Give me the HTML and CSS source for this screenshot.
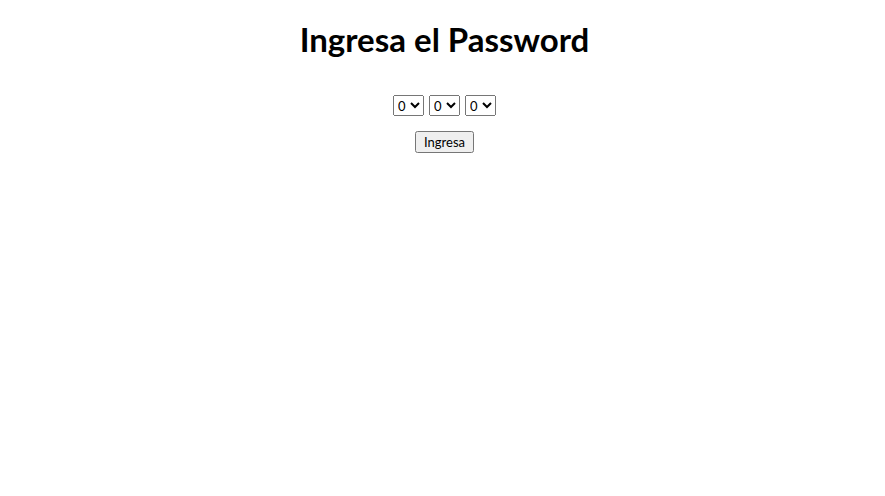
FILE: index.html
```html
<!DOCTYPE html>
<html>
<head>
<meta charset="utf-8">
<link rel="stylesheet" href="styles.css">
</head>
<body>
<div class="page">
  <h1 class="title">Ingresa el Password</h1>
  <form class="form">
    <div class="selects">
      <select class="digit"><option>0</option><option>1</option><option>2</option><option>3</option><option>4</option><option>5</option><option>6</option><option>7</option><option>8</option><option>9</option></select>
      <select class="digit"><option>0</option><option>1</option><option>2</option><option>3</option><option>4</option><option>5</option><option>6</option><option>7</option><option>8</option><option>9</option></select>
      <select class="digit"><option>0</option><option>1</option><option>2</option><option>3</option><option>4</option><option>5</option><option>6</option><option>7</option><option>8</option><option>9</option></select>
    </div>
    <div class="actions">
      <button type="button" class="submit">Ingresa</button>
    </div>
  </form>
</div>
</body>
</html>
```
FILE: styles.css
```css
html, body {
  margin: 0;
  background: #fff;
}
.page {
  font-family: Lato, "Liberation Sans", sans-serif;
  text-align: center;
  padding-top: 19px;
  padding-left: 4px;
}
.title {
  margin: 0;
  font-size: 33px;
  font-weight: bold;
  color: #000;
  line-height: 40px;
}
.form {
  margin-top: 36px;
}
.selects {
  display: flex;
  justify-content: center;
  gap: 5px;
}
.digit {
  font-family: Lato, sans-serif;
  font-size: 13px;
  height: 21px;
  width: 31px;
  padding: 0;
}
.actions {
  margin-top: 15px;
}
.submit {
  font-family: Lato, sans-serif;
  font-size: 13px;
  height: 22px;
  width: 59px;
  padding: 0;
}
```
